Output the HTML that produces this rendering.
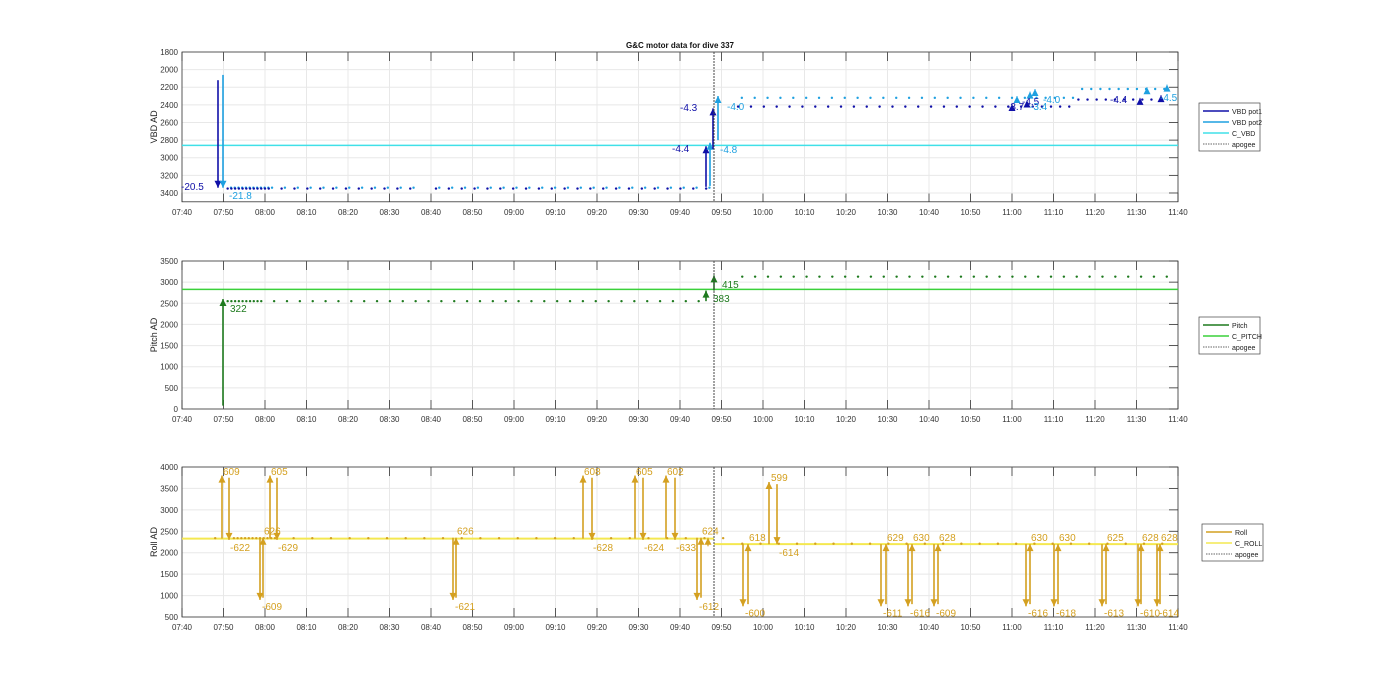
<!DOCTYPE html>
<html><head><meta charset="utf-8"><style>
html,body{margin:0;padding:0;background:#fff;width:1400px;height:693px;overflow:hidden}
svg text{font-family:"Liberation Sans",Arial,sans-serif}
</style></head><body>
<svg id="s" width="1400" height="693" xmlns="http://www.w3.org/2000/svg"></svg>
<script>
const S=document.getElementById('s');let h='';
const X0=182,X1=1178,PX=(X1-X0)/240;
const tx=m=>X0+m*PX;
const labels=[];for(let i=0;i<=24;i++){let m=7*60+40+i*10;labels.push(String(Math.floor(m/60)).padStart(2,'0')+':'+String(m%60).padStart(2,'0'));}
function axes(top,bot,vmin,vmax,yt,ylab,rev){
 const Y=rev?(v=>top+(v-vmin)*(bot-top)/(vmax-vmin)):(v=>bot-(v-vmin)*(bot-top)/(vmax-vmin));
 h+=`<rect x="${X0}" y="${top}" width="${X1-X0}" height="${bot-top}" fill="#fff"/>`;
 for(let i=0;i<=24;i++){let x=X0+i*(X1-X0)/24;h+=`<line x1="${x}" y1="${top}" x2="${x}" y2="${bot}" stroke="#e8e8e8" stroke-width="1"/>`;
 h+=`<line x1="${x}" y1="${bot}" x2="${x}" y2="${bot-9}" stroke="#333" stroke-width="0.8"/><line x1="${x}" y1="${top}" x2="${x}" y2="${top+9}" stroke="#333" stroke-width="0.8"/>`;
 h+=`<text x="${x}" y="${bot+13}" font-size="8" fill="#333" text-anchor="middle">${labels[i]}</text>`;}
 yt.forEach(v=>{let y=Y(v);h+=`<line x1="${X0}" y1="${y}" x2="${X1}" y2="${y}" stroke="#e8e8e8"/><line x1="${X1}" y1="${y}" x2="${X1-9}" y2="${y}" stroke="#333" stroke-width="0.8"/><text x="${X0-4}" y="${y+3}" font-size="8" fill="#333" text-anchor="end">${v}</text>`;});
 h+=`<rect x="${X0}" y="${top}" width="${X1-X0}" height="${bot-top}" fill="none" stroke="#333" stroke-width="0.8"/>`;
 let cy=(top+bot)/2;h+=`<text transform="translate(157,${cy}) rotate(-90)" font-size="9" fill="#222" text-anchor="middle">${ylab}</text>`;
 return Y;}
function arrow(x,y1,y2,c,w){w=w||1.6;h+=`<line x1="${x}" y1="${y1}" x2="${x}" y2="${y2}" stroke="${c}" stroke-width="${w}"/>`;
 let d=y2<y1?1:-1;h+=`<polygon points="${x-3.5},${y2+7*d} ${x+3.5},${y2+7*d} ${x},${y2}" fill="${c}"/>`;}
function dot(x,y,c){h+=`<circle cx="${x}" cy="${y}" r="1.2" fill="${c}"/>`;}
function txt(x,y,t,c,s){h+=`<text x="${x}" y="${y}" font-size="${s||10}" fill="${c}">${t}</text>`;}
function apo(top,bot){h+=`<line x1="714" y1="${top}" x2="714" y2="${bot}" stroke="#444" stroke-width="1" stroke-dasharray="2,1"/>`;}
function legend(x,y,items){let ht=items.length*11+4;h+=`<rect x="${x}" y="${y}" width="61" height="${ht}" fill="#fff" stroke="#444" stroke-width="0.7"/>`;
 items.forEach((it,i)=>{let yy=y+8+i*11;h+=`<line x1="${x+4}" y1="${yy}" x2="${x+30}" y2="${yy}" stroke="${it[1]}" stroke-width="${it[2]||1.6}" ${it[3]?'stroke-dasharray="1.5,1"':''}/>`;txt(x+33,yy+3,it[0],'#222',7);});}
h+=`<text x="680" y="48" font-size="8" font-weight="bold" fill="#111" text-anchor="middle">G&amp;C motor data for dive 337</text>`;
// ---- Plot 1 (reversed)
const D='#1010a8',L='#1ea0e0',C='#40e0e8';
let Y=axes(52,201.8,1800,3500,[1800,2000,2200,2400,2600,2800,3000,3200,3400],'VBD AD',true);
h+=`<line x1="${X0}" y1="${Y(2860)}" x2="${X1}" y2="${Y(2860)}" stroke="${C}" stroke-width="1.5"/>`;
for(let m=11;m<=127;m+=(m<20?0.9:3.1)){if(m>57&&m<60)continue;dot(tx(m),Y(3350),D);dot(tx(m+0.8),Y(3340),L);}
arrow(218,Y(2120),Y(3340),D);arrow(223,Y(2060),Y(3340),L);
txt(181,190,'-20.5',D);txt(229,199,'-21.8',L);
arrow(706,Y(3330),Y(2870),D);arrow(710,Y(3320),Y(2830),L);arrow(713,Y(2900),Y(2440),D);arrow(718,Y(2800),Y(2300),L);
txt(672,152,'-4.4',D);txt(680,111,'-4.3',D);txt(727,110,'-4.0',L);txt(720,153,'-4.8',L);
for(let m=134;m<=205;m+=(3.1)){dot(tx(m),Y(2420),D);dot(tx(m+0.9),Y(2320),L);}
for(let m=205;m<=236;m+=2.2){dot(tx(m),Y(m<215?2420:2340),D);dot(tx(m+0.9),Y(m<214?2320:2220),L);}
arrow(1012,Y(2420),Y(2390),D,1);arrow(1017,Y(2330),Y(2300),L,1);arrow(1027,Y(2380),Y(2350),D,1);arrow(1030,Y(2300),Y(2250),L,1);arrow(1035,Y(2260),Y(2220),L,1);
arrow(1140,Y(2350),Y(2320),D,1);arrow(1147,Y(2230),Y(2200),L,1);arrow(1161,Y(2330),Y(2290),D,1);arrow(1167,Y(2200),Y(2170),L,1);
txt(1007,110,'-3.7',D);txt(1022,105,'-4.5',D);txt(1030,110,'-3.4',L);txt(1043,103,'-4.0',L);txt(1110,103,'-4.4',D);txt(1160,101,'-4.5',L);
apo(52,201.8);
legend(1199,103,[['VBD pot1',D],['VBD pot2',L],['C_VBD',C],['apogee','#666',1,1]]);
// ---- Plot 2
const G='#1e7a1e',GL='#3ad03a';
Y=axes(261,409,0,3500,[0,500,1000,1500,2000,2500,3000,3500],'Pitch AD');
h+=`<line x1="${X0}" y1="${Y(2830)}" x2="${X1}" y2="${Y(2830)}" stroke="${GL}" stroke-width="1.5"/>`;
for(let m=11;m<=126;m+=(m<19?0.9:3.1)){dot(tx(m),Y(2550),G);}
for(let m=135;m<=239;m+=3.1){dot(tx(m),Y(3130),G);}
arrow(223,Y(80),Y(2600),G);txt(230,312,'322',G);
arrow(706,Y(2550),Y(2800),G);txt(713,302,'383',G);arrow(714,Y(2800),Y(3160),G);txt(722,288,'415',G);
apo(261,409);
legend(1199,317,[['Pitch',G],['C_PITCH',GL],['apogee','#666',1,1]]);
// ---- Plot 3
const R='#d4a020',RL='#f4e850';
Y=axes(467,617,500,4000,[500,1000,1500,2000,2500,3000,3500,4000],'Roll AD');
h+=`<line x1="${X0}" y1="${Y(2330)}" x2="714" y2="${Y(2330)}" stroke="${RL}" stroke-width="2"/><line x1="714" y1="${Y(2200)}" x2="${X1}" y2="${Y(2200)}" stroke="${RL}" stroke-width="2"/>`;
for(let m=8;m<=132;m+=(m>12&&m<22?0.9:4.5))dot(tx(m),Y(2340),R);
for(let m=135;m<=238;m+=4.4)dot(tx(m),Y(2210),R);
const up=(x,lab)=>{arrow(x,Y(2330),Y(3800),R);txt(x+1,475,lab,R);};
const dn=(x,lab)=>{arrow(x,Y(3750),Y(2300),R);txt(x+1,551,lab,R);};
up(222,'609');dn(229,'-622');up(270,'605');dn(277,'-629');
up(583,'608');dn(592,'-628');up(635,'605');dn(643,'-624');up(666,'602');dn(675,'-633');
const pair=(xd,xu,ld,lu,base,tip)=>{arrow(xd,Y(base),Y(tip),R);arrow(xu,Y(tip+50),Y(base),R);txt(xd+2,Y(tip)+10,ld,R);txt(xu+1,Y(base)-3,lu,R);};
pair(260,263,'-609','626',2350,900);pair(453,456,'-621','626',2350,900);pair(697,701,'-612','624',2350,900);
arrow(708,Y(2150),Y(2350),R,1.2);
pair(743,748,'-600','618',2200,750);
arrow(769,Y(2200),Y(3650),R);txt(771,481,'599',R);arrow(777,Y(3600),Y(2200),R);txt(779,556,'-614',R);
[[881,886,'-611','629'],[908,912,'-616','630'],[934,938,'-609','628'],[1026,1030,'-616','630'],[1054,1058,'-618','630'],[1102,1106,'-613','625'],[1138,1141,'-610','628'],[1157,1160,'-614','628']].forEach(p=>pair(p[0],p[1],p[2],p[3],2200,750));
apo(467,617);
legend(1202,524,[['Roll',R],['C_ROLL',RL],['apogee','#666',1,1]]);
S.innerHTML=h;
</script>
</body></html>
